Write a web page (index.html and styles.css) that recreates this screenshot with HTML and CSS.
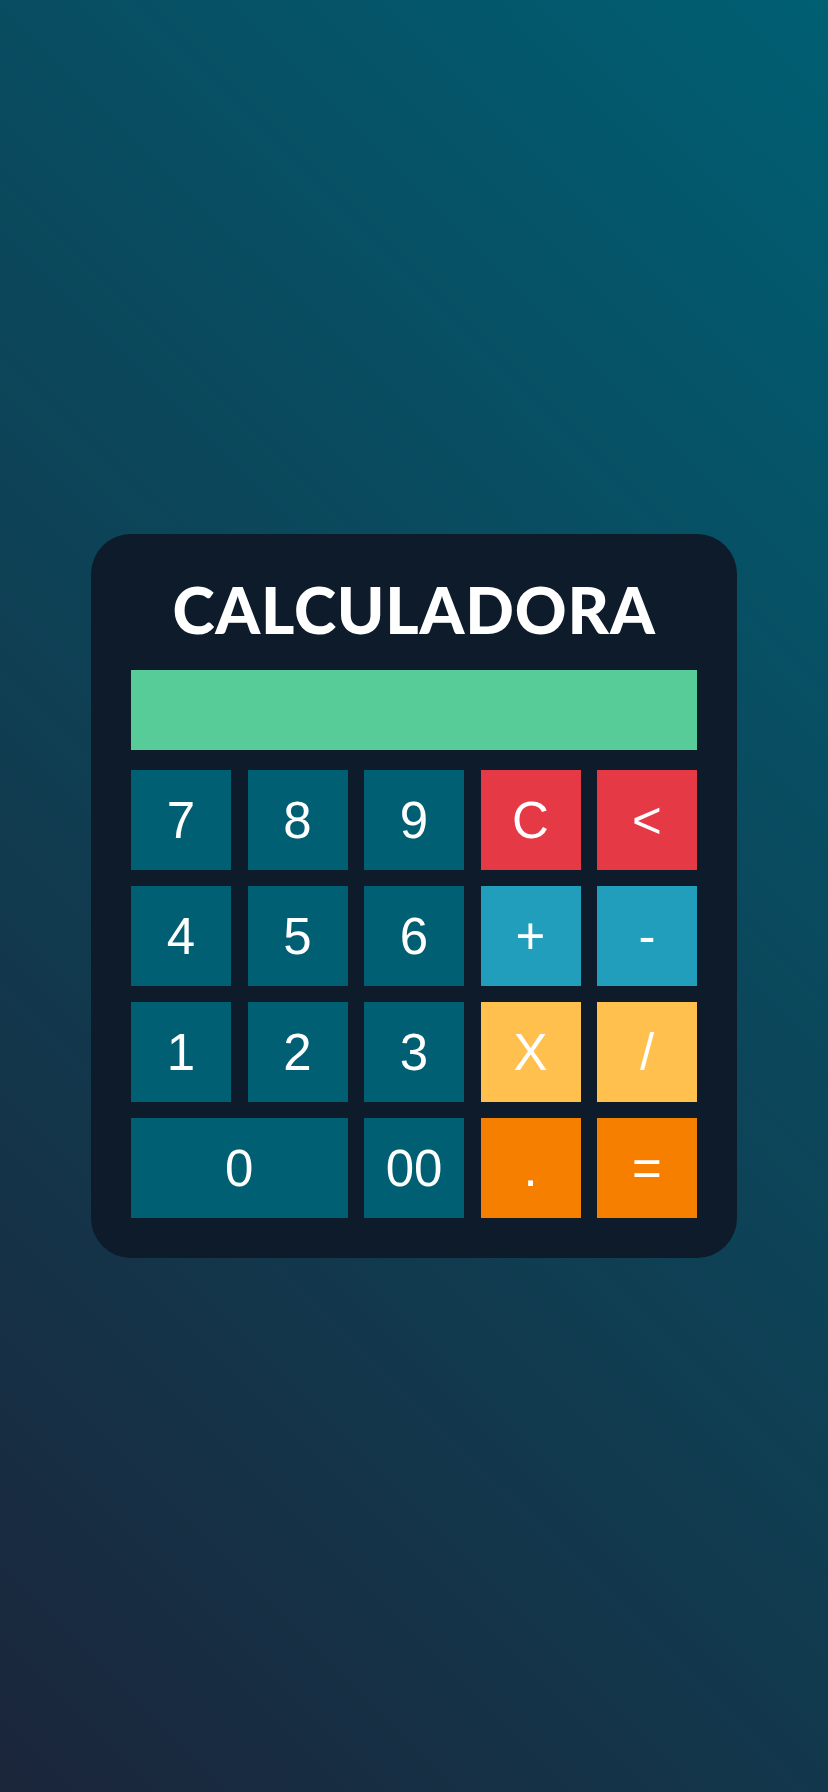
FILE: index.html
```html
<!DOCTYPE html>
<html lang="pt">
<head>
<meta charset="utf-8">
<title>Calculadora</title>
<link rel="stylesheet" href="styles.css">
</head>
<body>
  <main class="calc">
    <h1 class="calc-title">CALCULADORA</h1>
    <div class="calc-display"></div>
    <div class="calc-keys">
      <button class="key key-num">7</button>
      <button class="key key-num">8</button>
      <button class="key key-num">9</button>
      <button class="key key-clear">C</button>
      <button class="key key-clear">&lt;</button>
      <button class="key key-num">4</button>
      <button class="key key-num">5</button>
      <button class="key key-num">6</button>
      <button class="key key-add">+</button>
      <button class="key key-add">-</button>
      <button class="key key-num">1</button>
      <button class="key key-num">2</button>
      <button class="key key-num">3</button>
      <button class="key key-mul">X</button>
      <button class="key key-mul">/</button>
      <button class="key key-num key-wide">0</button>
      <button class="key key-num">00</button>
      <button class="key key-eq">.</button>
      <button class="key key-eq">=</button>
    </div>
  </main>
</body>
</html>
```

FILE: styles.css
```css
* {
  box-sizing: border-box;
}

html, body {
  margin: 0;
  padding: 0;
}

body {
  min-height: 100vh;
  display: flex;
  align-items: center;
  justify-content: center;
  background: linear-gradient(45deg, #1b253a, #005f73);
  font-family: "Liberation Sans", Arial, sans-serif;
}

.calc {
  width: 646px;
  padding: 36px 40px 40px;
  background: #0d1b2a;
  border-radius: 40px;
  display: flex;
  flex-direction: column;
}

.calc-title {
  margin: 0 0 20px;
  height: 80px;
  line-height: 80px;
  text-align: center;
  color: #ffffff;
  font-family: Lato, "Noto Sans", sans-serif;
  font-weight: 900;
  font-size: 64px;
  letter-spacing: 0.8px;
}

.calc-display {
  height: 80px;
  background: #57cc99;
  margin-bottom: 20px;
}

.calc-keys {
  display: grid;
  grid-template-columns: repeat(5, 100px);
  justify-content: space-between;
  grid-auto-rows: 100px;
  row-gap: 16px;
}

.key {
  border: none;
  margin: 0;
  padding: 0;
  color: #ffffff;
  font-family: "Liberation Sans", Arial, sans-serif;
  font-size: 51px;
  display: flex;
  align-items: center;
  justify-content: center;
}

.key-num { background: #005f73; }
.key-clear { background: #e63946; }
.key-add { background: #219ebc; }
.key-mul { background: #ffc04d; }
.key-eq { background: #f77f00; }

.key-wide {
  grid-column: span 2;
}
```
